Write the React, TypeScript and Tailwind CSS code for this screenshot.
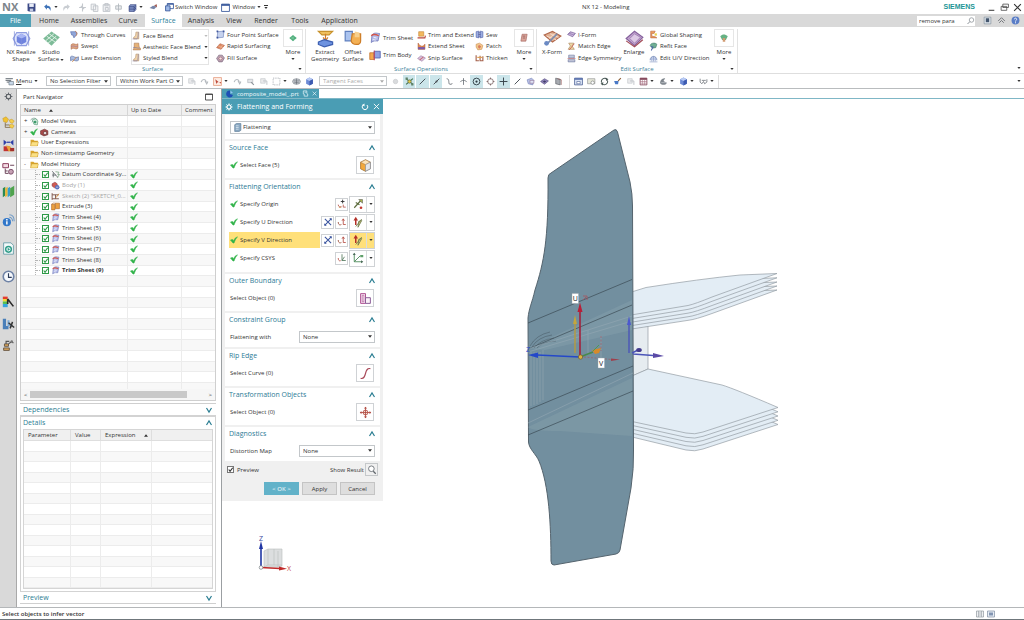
import React from "react";

const glyphs: Record<string, React.ReactNode> = {
  save: (<><path d="M1 1h14v14H3l-2-2z" fill="#3c4a86" /><path d="M4 1h8v6H4z" fill="#e9edf7" /><path d="M5 10h6v5H5z" fill="#c3cae2" /></>),
  undo: <path d="M2 6l5-4v3c6 0 8 4 6 9-1-4-3-5-6-5v3z" fill="#3f73b8" />,
  redo: <path d="M14 6L9 2v3C3 5 1 9 3 14c1-4 3-5 6-5v3z" fill="#c9cdd2" />,
  cut: <path d="M8 1v14M2 8h12M5 5l6 6" stroke="#c4c8cd" strokeWidth="2" fill="none" />,
  copy: <path d="M2 2h8v10H2zM6 5h8v10H6z" stroke="#bcc1c7" strokeWidth="1.5" fill="#f5f5f6" />,
  paste: <path d="M2 3h12v12H2zM5 1h6v4H5zM6 8h5v5H6z" stroke="#bcc1c7" strokeWidth="1.5" fill="#f1f1f3" />,
  brush: <path d="M8 1v14M3 5h10v6H3z" stroke="#b0b5bb" strokeWidth="1.5" fill="#eceef0" />,
  layers: (<><path d="M4 3h10v9l-3 3H2V6z" fill="#8fa3d4" stroke="#2f3e7c" strokeWidth="1.2" /><path d="M2 6h9l3-3M11 6v9M2 9h9l3-3M2 12h9l3-3" fill="none" stroke="#2f3e7c" strokeWidth="1.2" /></>),
  touch: (<><path d="M1 9l6-4 7 1-5 5z" fill="#7684a8" /><path d="M9 4l5-2v6z" fill="#a35c52" /></>),
  switchwin: (<><path d="M4 1h11v9H4z" fill="#fff" stroke="#35569a" strokeWidth="1.5" /><path d="M1 5h8v9H1z" fill="#9db8e6" stroke="#35569a" strokeWidth="1.5" /><path d="M4 1h11v2H4z" fill="#35569a" /></>),
  windowi: (<><path d="M1 2h14v13H1z" fill="#fff" stroke="#35569a" strokeWidth="1.5" /><path d="M1 2h14v3H1z" fill="#35569a" /></>),
  realize: (<><path d="M4 3h8l3 5-3 6H4L1 8z" fill="#dfe5fb" stroke="#8f9de0" /><path d="M8 4l4 2v5l-4 2-4-2V6z" fill="#6f83de" /><path d="M8 4l4 2-4 2-4-2z" fill="#a9b6f4" /><path d="M8 8v5M2 2v12M14 2v12" stroke="#7c8bd8" strokeWidth=".6" /></>),
  studio: (<><path d="M1 8l7-6 7 5-7 7z" fill="#7dbb98" /><path d="M3 10l7-6M5 12l7-6M4 6l7 5M6 4l7 5" stroke="#e0f2e7" strokeWidth=".8" /></>),
  curves: (<><path d="M1 3h9c3 1 3 4 1 6l-4 5-2-5H3z" fill="#91a6d8" stroke="#4c63a8" /><path d="M9 2c4 2 4 6 1 9" stroke="#c87b4c" fill="none" strokeWidth="1.5" /></>),
  swept: (<><path d="M2 5c4-5 8 2 12-2v8c-4 4-8-3-12 2z" fill="#e0a680" stroke="#a6603c" /><path d="M2 9c4-5 8 2 12-2" stroke="#8f6fa0" fill="none" /></>),
  law: (<><path d="M1 5c4-4 8 4 14 0v6c-5 4-9-3-14 1z" fill="#a9bbe0" stroke="#4a6198" /><path d="M4 14l8-9" stroke="#d08a4a" strokeWidth="1.5" /></>),
  blend: (<><path d="M7 2h5v12H3v-3c3-1 4-4 4-9z" fill="#efd2a8" stroke="#b08a62" /><path d="M1 14h8c2-3 2-7 2-12" stroke="#8b84a8" strokeWidth="1.2" fill="none" /></>),
  blend2: (<><path d="M4 2h8c0 5 1 8 3 9v3H2c2-3 2-7 2-12z" fill="#e6b277" stroke="#a5714a" /><path d="M2 10c4-1 6 1 12 1" stroke="#6a6fa6" fill="none" /></>),
  four: (<><path d="M3 3l11-1-1 11-11 1z" fill="#c6d2ee" stroke="#6177b4" /><path d="M1 1h3v3H1zM12 1h3v3h-3zM1 12h3v3H1z" fill="#3f569c" /></>),
  rapid: (<><path d="M1 10l6-7 8 3-6 7z" fill="#dd8a62" stroke="#b05a3c" /><path d="M4 7l8 3M7 12l5-7" stroke="#f2c1a4" /></>),
  fill: (<><path d="M1 8l4-6h6l4 5-4 7H5z" fill="#b9a2b3" stroke="#71586f" /><path d="M5 8l3-3 3 3-3 3z" fill="#efe6ec" stroke="#a84f4f" /></>),
  more1: (<><path d="M2 8l6-5 6 5-6 5z" fill="#4fae7c" /><path d="M5 10l6-5M5 6l6 5" stroke="#9ad4b3" strokeWidth=".8" /></>),
  more2: (<><path d="M5 2h8l-2 11H3z" fill="#dba59a" stroke="#a0625b" /><path d="M6 5h4M6 8h4" stroke="#7d4a4a" /></>),
  more3: (<><path d="M2 5c4-4 8-3 12 0l-3 6H5z" fill="#66b284" /><path d="M6 8h4v6H6z" fill="#d19b72" /></>),
  extract: (<><path d="M2 2h12l-3 3H5z" fill="#f0c05e" stroke="#c8922d" /><path d="M8 4v5M6 7l2 3 2-3" stroke="#d37c2a" fill="none" /><path d="M2 11l5-2 7 2v2l-7 2-5-2z" fill="#6e93e0" stroke="#3d5fb1" /></>),
  offset: (<><path d="M1 2h6v8H1z" fill="#aac3ef" stroke="#5f80bf" /><path d="M7 4h7v6c0 4-7 4-8 0z" fill="#f3b054" stroke="#cd7d27" /><path d="M9 2l4 1v4H9z" fill="#f7d08f" /></>),
  trims: (<><path d="M4 4c3-4 7-2 10-2l-2 10c-3 0-6-1-9 2z" fill="#b7bde9" stroke="#6670b6" /><path d="M3 5c3-3 6-2 10 0" stroke="#d4574b" strokeWidth="1.8" fill="none" /><path d="M6 7l4 1M5 10l4 1" stroke="#fff" /></>),
  trimb: (<><path d="M1 5h6v9H1z" fill="#f3a64e" stroke="#c2722a" /><path d="M7 3h8v9H7z" fill="#8fa1e2" stroke="#4858a8" /><path d="M7 2v13" stroke="#c13f5e" strokeWidth="1.3" /></>),
  extend: (<><path d="M3 3h9v8H3z" fill="#f3b95e" stroke="#c07f2d" /><path d="M1 14h13l1-4" stroke="#b8483f" strokeWidth="2" fill="none" /></>),
  extsheet: (<><path d="M2 2v11h12V4c-3 5-8 5-12-2z" fill="#e58a49" stroke="#a9502b" /><path d="M2 9h12v4H2z" fill="#7a5aa8" /></>),
  snip: (<><path d="M1 8l6-5 8 4-6 6z" fill="#d7bfd8" stroke="#9b77a3" /><path d="M5 11c2-5 5-2 6-6" stroke="#c24c56" fill="none" strokeWidth="1.5" /></>),
  sew: (<><path d="M2 3l5-1v12l-5-1zM9 2l5 1v10l-5 1z" fill="#9daee2" stroke="#4657a0" /><path d="M6 5h4M6 8h4M6 11h4" stroke="#333d80" /></>),
  patch: (<><path d="M2 4l6-2 6 4-2 7-7 1-3-5z" fill="#f2c88d" stroke="#c98a4a" /><path d="M7 5l4 3-3 4-3-3z" fill="#d97c5e" /></>),
  thicken: (<><path d="M2 2v10h5M9 3v9h5V4" stroke="#a5624c" strokeWidth="2" fill="none" /><path d="M4 6h9" stroke="#dda14f" strokeWidth="2" /></>),
  xform: (<><path d="M1 5l7-3 7 4-7 5z" fill="#e2b193" stroke="#b2694c" /><path d="M3 6l8 3M6 4l7 3M5 8l6-5" stroke="#f7e2d3" strokeWidth=".7" /><path d="M3 13l9-9" stroke="#7b8cae" strokeWidth="1.4" /><circle cx="3" cy="12" r="2" fill="#6b8ac4" /></>),
  iform: (<><path d="M1 8l5-5 9 3-5 6z" fill="#a188bd" stroke="#694c8d" /><path d="M3 8l8 2M6 5l7 2" stroke="#e7def0" /></>),
  match: (<><path d="M3 2h9l-3 5 4 6H2l4-6z" fill="#eed8a5" stroke="#a17b4f" /><path d="M4 14L13 3" stroke="#c44b42" strokeWidth="1.4" /></>),
  edgesym: (<><path d="M3 2h10v5H3zM2 10h12v4H2z" fill="#c4c9dc" stroke="#626c95" /><path d="M1 8h14" stroke="#b04f4f" /></>),
  enlarge: (<><path d="M1 8l7-6 7 5-7 7z" fill="#c3a4cf" stroke="#84609b" /><path d="M4 8l4-4 5 3-5 5z" fill="#ddc9e5" stroke="#9a78ae" strokeWidth=".7" /><path d="M1 10l7 5 7-6" stroke="#a34c57" fill="none" /></>),
  global: (<><path d="M3 2h8l-2 4H5v5l6 1 3 2H3z" fill="#f0a05a" stroke="#b5603b" /><path d="M10 6h4v4h-4z" fill="#e8d04a" /></>),
  refit: (<><path d="M2 6c2-5 9-5 12-2l-2 6-6 1z" fill="#6fae94" stroke="#417a69" /><path d="M3 8l4 1-3 6" stroke="#4a64a4" strokeWidth="1.8" fill="none" /></>),
  edituv: (<><path d="M2 11C2 2 14 2 14 11" fill="#cfd9ef" stroke="#6077ac" strokeWidth="1.2" /><path d="M1 14h14M5 6v7M8 4v9M11 6v7" stroke="#7388bb" /></>),
  menu: (<><path d="M1 3h13M1 6h10M3 9h8" stroke="#555d66" strokeWidth="1.6" /><path d="M7 8h8v6H7z" fill="#c7d7e7" stroke="#5d6b78" /></>),
  ghost: (<><path d="M3 3h8v8H3z" fill="#ececee" stroke="#b9bdc2" /><path d="M7 7h7v7" fill="none" stroke="#b9bdc2" strokeWidth="1.5" /></>),
  ghost2: <path d="M2 9c2-6 8-6 9 0M9 7l3 5 2-4" fill="none" stroke="#b4b9be" strokeWidth="2" />,
  ghost3: (<><path d="M3 4h9v6H3z" fill="#e4e6e9" stroke="#a7acb2" /><path d="M9 9l5 5" stroke="#8e949b" strokeWidth="2" /></>),
  redsel: (<><path d="M1 1h14v14H1z" fill="#fdeee6" stroke="#dc7850" /><path d="M4 4l6 5-3 1-1 3zM11 9h3v3" fill="#be4a3a" /></>),
  dashed: <path d="M2 2h12v12H2z" fill="none" stroke="#8b9299" strokeDasharray="2 2" strokeWidth="1.3" />,
  globe: (<><ellipse cx="8" cy="8" rx="7" ry="5" fill="#c8ccd2" stroke="#70777f" /><path d="M3 7h10M4 10h8M8 3v10" stroke="#596068" /></>),
  cube: (<><path d="M8 1l6 3v8l-6 3-6-3V4z" fill="#6d8bd6" /><path d="M8 1l6 3-6 3-6-3z" fill="#bacbf4" /><path d="M8 7l6-3v8l-6 3z" fill="#3d5bb0" /></>),
  dot: <circle cx="8" cy="8" r="4" fill="#d9dbdd" stroke="#c0c3c6" />,
  snap: (<><path d="M2 3l12 10M14 3L2 13" stroke="#3f6f4c" strokeWidth="2" /><circle cx="8" cy="8" r="3" fill="#dfc84b" stroke="#4c5f45" /><path d="M1 1h4v4H1zM11 11h4v4h-4z" fill="#5f8268" /></>),
  line: <path d="M3 13L13 3" stroke="#454c53" strokeWidth="1.7" />,
  linedot: (<><path d="M3 13L13 3" stroke="#454c53" strokeWidth="1.7" /><circle cx="8" cy="8" r="1.8" fill="#454c53" /></>),
  scurve: <path d="M3 3c6 0 2 10 6 10s4-2 4-2" stroke="#62686f" strokeWidth="1.5" fill="none" />,
  cross: <path d="M8 2v12M2 9c3-4 9-4 12 0" stroke="#62686f" strokeWidth="1.4" fill="none" />,
  target: (<><circle cx="8" cy="8" r="6" fill="none" stroke="#2d3a42" strokeWidth="1.6" /><circle cx="8" cy="8" r="2" fill="#2d3a42" /></>),
  diamond: (<><circle cx="8" cy="8" r="5" fill="none" stroke="#7a6464" strokeWidth="1.4" /><path d="M8 1v3M8 12v3M1 8h3M12 8h3" stroke="#7a6464" strokeWidth="1.5" /></>),
  plus: <path d="M8 1v14M1 8h14" stroke="#37434a" strokeWidth="1.7" />,
  facept: (<><path d="M2 5l8-3 4 4-2 8-8-2z" fill="#b8c2e7" stroke="#6a78b2" /><path d="M7 6h7v5H7z" fill="#dfe4f6" stroke="#8e6c8e" /></>),
  purple: (<><path d="M1 8l7-5 7 4-7 6z" fill="#8c80b6" stroke="#4b4377" /><path d="M5 8l3-2 3 2-3 2z" fill="#3e3b66" /></>),
  grid3: (<><path d="M3 2l8 2v10l-8-2z" fill="#a7abb1" stroke="#4c5056" /><path d="M6 3l7 2v9" fill="none" stroke="#8b4a4a" /></>),
  viewfit: (<><path d="M1 2h14v12H1z" fill="#dbe4f5" stroke="#42588f" strokeWidth="1.3" /><path d="M1 2h14v3H1z" fill="#5a72ae" /><path d="M5 8h6v4H5z" fill="#fff" stroke="#42588f" /></>),
  zoomimg: (<><path d="M1 3h13v9H1z" fill="#e6e7d9" stroke="#85888a" /><circle cx="10" cy="10" r="3" fill="#fff" stroke="#6b6e70" /></>),
  rotate: (<><path d="M3 10A5.500 5.500 0 0 1 12 4M13 6A5.500 5.500 0 0 1 4 12" stroke="#4b5a57" strokeWidth="1.8" fill="none" /><path d="M10 1l5 3-4 3zM6 9l-5 3 4 3z" fill="#4b5a57" /></>),
  paint: (<><path d="M9 7l5-5" stroke="#8c5d35" strokeWidth="2" /><path d="M2 7h8l-1 6H4z" fill="#4a79c6" /></>),
  tabler: (<><path d="M2 2h12v12H2z" fill="#fff" stroke="#7e3e53" strokeWidth="1.4" /><path d="M2 2h12v3H2z" fill="#7e3e53" /><path d="M2 8h12M2 11h12M6 5v9M10 5v9" stroke="#a86e80" /></>),
  wedge: (<><path d="M2 11c0-7 5-9 9-9l-3 5 6 3c-2 5-9 5-12 1z" fill="#7f868d" /><path d="M4 10h9" stroke="#dadde0" /></>),
  glasses: <path d="M2 3v6l3 3 3-4 2 4 4-3V4M5 6h7" stroke="#6b7076" strokeWidth="1.4" fill="none" />,
  gear: (<><circle cx="8" cy="8" r="4" fill="none" stroke="#5a5f64" strokeWidth="2" /><path d="M8 1v3M8 12v3M1 8h3M12 8h3M3 3l2 2M11 11l2 2M13 3l-2 2M5 11l-2 2" stroke="#5a5f64" strokeWidth="1.6" /></>),
  gearw: (<><circle cx="8" cy="8" r="4" fill="none" stroke="#fff" strokeWidth="2.2" /><path d="M8 1v3M8 12v3M1 8h3M12 8h3M3 3l2 2M11 11l2 2M13 3l-2 2M5 11l-2 2" stroke="#fff" strokeWidth="2" /></>),
  asm: (<><path d="M1 3l4-2 3 3-2 4-4-1z" fill="#f1c232" stroke="#c1911a" strokeWidth=".6" /><path d="M4 8v6h6M4 11h5" stroke="#7a6540" fill="none" /><path d="M9 5l3-1 3 2-2 3-3-1zM9 11l3-1 3 2-2 3-3-1z" fill="#f4cf4f" stroke="#c1911a" strokeWidth=".6" /></>),
  constr: (<><path d="M2 1v7l4-4zM14 1v7l-4-4z" fill="#2d3fa8" /><path d="M6 4h4" stroke="#2d3fa8" strokeWidth="1.5" /><path d="M2 9h7v6H2z" fill="#c23431" /><path d="M5 8l5 1 4 6H8z" fill="#e8a23a" /><path d="M10 11h5v4h-5z" fill="#a3302c" /></>),
  partnav: (<><path d="M1 2h7v5H1z" fill="#f3dce4" stroke="#8b3d5d" strokeWidth="1.2" /><path d="M10 4h5M4 8v6h4M4 11h3" stroke="#6b4358" strokeWidth="1.2" fill="none" /><circle cx="11" cy="12" r="3" fill="#c5a1b4" stroke="#6d3c5a" /></>),
  books: (<><path d="M1 4l3-2v11l-3 2z" fill="#2a8a53" /><path d="M4 4l3-2v11l-3 2z" fill="#edb42f" /><path d="M7 4l3-2v11l-3 2z" fill="#37a0c9" /><path d="M10 4l5-3v11l-5 3z" fill="#4fa34e" /></>),
  info: (<><circle cx="6" cy="10" r="5" fill="#3177c9" /><path d="M6 9v4M6 6v2" stroke="#fff" strokeWidth="1.8" /><path d="M9 4c2 0 4 2 4 5M9 1c4 0 6 3 6 8" stroke="#6e99c6" strokeWidth="1.3" fill="none" /></>),
  web: (<><path d="M2 1h9l3 3v11H2z" fill="#f3fafa" stroke="#5c95a0" /><circle cx="8" cy="9" r="3.500" fill="none" stroke="#2f9c88" strokeWidth="1.8" /><path d="M7 7l3 2-3 2z" fill="#2f9c88" /></>),
  clock: (<><circle cx="8" cy="8" r="6.500" fill="#f6f9fd" stroke="#6f83a6" strokeWidth="2" /><path d="M8 4v5h4" stroke="#2c3a57" strokeWidth="1.4" fill="none" /></>),
  palette: (<><path d="M1 2h6v3H1z" fill="#e33d2e" /><path d="M1 5h6v3H1z" fill="#f2d835" /><path d="M1 8h6v3H1z" fill="#54c04b" /><path d="M1 11h6v4H1z" fill="#35a5de" /><path d="M7 5l7 9M7 5v6" stroke="#2a2a2a" strokeWidth="2" /></>),
  roles: (<><path d="M3 2v11h5" stroke="#4a7fb9" strokeWidth="4" fill="none" /><path d="M8 4v6h4" stroke="#78a8d6" strokeWidth="2.5" fill="none" /><path d="M10 14l3-8M8 7l7 6" stroke="#333" strokeWidth="1.8" /></>),
  proc: (<><path d="M3 6h5v3H3zM2 11h7v3H2z" fill="#d9a45b" stroke="#56493a" /><path d="M8 6l4-3 2 2M5 6V3h4" stroke="#555" strokeWidth="1.4" fill="none" /><circle cx="12" cy="3" r="1.500" fill="#777" /></>),
  views: (<><path d="M1 6c2-5 9-5 12-1M3 9c2-3 8-3 10 0" stroke="#6f8f85" strokeWidth="1.2" fill="none" /><path d="M4 5l6-2 4 4-1 7-6-1z" fill="#d5ebdf" stroke="#3f8f67" /><circle cx="9" cy="9" r="2.500" fill="#3f9c6c" /></>),
  camera: (<><path d="M1 5l7-3 6 3v7l-7 2-6-3z" fill="#a84a4a" stroke="#5f2b2b" /><circle cx="9" cy="9" r="3" fill="#e5dada" stroke="#532a2a" /></>),
  folder: (<><path d="M1 3h5l2 2h6v9H1z" fill="#d9a52d" /><path d="M3 7h12l-2 7H1z" fill="#fbe083" stroke="#c1922c" strokeWidth=".7" /></>),
  datum: (<><path d="M2 2l10 11M4 13V5M2 9h7" stroke="#54595e" strokeWidth="1.3" fill="none" /><path d="M8 3l6 1-2 4h3l-4 6" stroke="#6d9a74" fill="none" strokeWidth="1.3" /></>),
  body: (<><path d="M2 5l5-3 4 3v5l-5 2-4-3z" fill="#d15b52" stroke="#8a3843" /><circle cx="11" cy="11" r="4" fill="#5b72bd" /><path d="M9 11h4" stroke="#fff" /></>),
  sketch: (<><path d="M2 2v12M2 5h12M2 12h12M8 5v7" stroke="#7a5146" strokeWidth="1.6" fill="none" /><path d="M9 10l5-7" stroke="#d58b35" strokeWidth="1.5" /></>),
  extrude: (<><path d="M1 4h6v10H1zM8 2h7v10H8z" fill="#eda13f" stroke="#a86120" /><path d="M1 4l3-2h4" stroke="#a86120" fill="none" /></>),
  flat: (<><path d="M3 3l3-2h8v12l-3 2H3z" fill="#8aa8c2" stroke="#4b6c8b" /><path d="M5 5h5M5 8h5M5 11h5" stroke="#e9f1f8" strokeWidth="1.2" /></>),
  face: (<><path d="M8 1l6 3v8l-6 3-6-3V4z" fill="#fff" stroke="#81756a" /><path d="M2 4l6 3v8l-6-3z" fill="#f3a93d" stroke="#b87a2c" strokeWidth=".7" /><path d="M8 1l6 3-6 3-6-3z" fill="#fbe3ba" stroke="#b87a2c" strokeWidth=".7" /><path d="M8 7l6-3v8l-6 3z" fill="#e4e6ea" stroke="#81858a" strokeWidth=".7" /></>),
  ptdlg: (<><path d="M9 1v6M6 4h6" stroke="#2e2e2e" strokeWidth="1.4" /><path d="M2 9c0 4 3 4 5 3M10 9v4h4" stroke="#b5534b" strokeWidth="1.3" fill="none" /><path d="M3 13h4" stroke="#c98443" strokeWidth="1.5" /></>),
  infer: (<><path d="M3 13L12 3M5 6l5 3" stroke="#5e6d3e" strokeWidth="1.5" /><path d="M9 2h5v5z" fill="#a9b54e" stroke="#555" strokeWidth=".7" /><circle cx="12" cy="13" r="1.800" fill="#c23a30" /></>),
  reverse: (<><path d="M3 3l10 10M13 3L3 13" stroke="#3b55a0" strokeWidth="1.7" /><path d="M10 2h4v4zM2 10v4h4z" fill="#3b55a0" /></>),
  vecdlg: (<><path d="M10 3v9h4M10 3l-2 3M10 3l2 3" stroke="#b3463c" strokeWidth="1.3" fill="none" /><path d="M2 8c0 5 3 5 5 4" stroke="#a25b49" strokeWidth="1.5" fill="none" /></>),
  vector: (<><path d="M5 12V5" stroke="#b33028" strokeWidth="2" /><path d="M2 6l3-5 3 5z" fill="#b33028" /><path d="M5 14l8-10M8 15l5-9-4 1z" stroke="#6e7b4a" strokeWidth="1.1" fill="#d8cf8a" /></>),
  csysdlg: (<><path d="M8 2v10h6M8 12l4-6" stroke="#4d7458" strokeWidth="1.3" fill="none" /><path d="M2 8c0 5 3 5 4 4" stroke="#b3463c" strokeWidth="1.3" fill="none" /></>),
  csys: (<><path d="M3 2v11h11M3 13l8-8" stroke="#4c8a5a" strokeWidth="1.2" fill="none" /><path d="M1 4l2-3 2 3zM12 11l3 2-3 2z" fill="#4c6a5a" /><path d="M11 4h4v3h-4z" fill="#5fa06a" /></>),
  boundary: (<><path d="M2 2h6v12H2z" fill="#f8e9f4" stroke="#ad4d8f" strokeWidth="1.2" /><path d="M4 4h2v8H4z" fill="#fff" stroke="#ad4d8f" strokeWidth=".8" /><path d="M8 7h6v7H8z" fill="#fbf2f8" stroke="#8a5a96" strokeWidth="1.2" /></>),
  curve: <path d="M2 14c4 1 5-2 6-6s2-7 6-6" stroke="#a84858" strokeWidth="1.4" fill="none" />,
  move: (<><circle cx="8" cy="8" r="3" fill="#f4dcd4" stroke="#b0483e" /><path d="M8 2v12M2 8h12" stroke="#b0483e" /><path d="M8 1l2 2H6zM8 15l2-2H6zM1 8l2-2v4zM15 8l-2-2v4z" fill="#b0483e" /></>),
  search: (<><circle cx="7" cy="6" r="4.500" fill="#fff" stroke="#5e646a" strokeWidth="1.3" /><path d="M10 10l4 4" stroke="#5e646a" strokeWidth="2" /></>),
  searchl: (<><circle cx="9" cy="6" r="4.500" fill="#fff" stroke="#8a9096" strokeWidth="1.5" /><path d="M6 9l-5 5" stroke="#8a9096" strokeWidth="2" /></>),
  page: (<><path d="M2 2h12v12H2z" fill="#dfe5ec" stroke="#74828f" /><path d="M5 4h6v7H5z" fill="#44566e" /></>),
  sheet: (<><path d="M1 2h14v12H1z" fill="#eef0f2" stroke="#8a9299" strokeWidth="1.3" /><path d="M5 2v12M11 2v12M5 6h6M5 10h6" stroke="#8a9299" /></>),
  sheet2: (<><path d="M1 2h14v12H1z" fill="#e6ecf4" stroke="#76859a" strokeWidth="1.3" /><path d="M4 5h8v6H4z" fill="#8295b2" /></>),
  up: <path d="M2 9l6-6 6 6M4 12l4-4 4 4" stroke="#5f6469" strokeWidth="1.5" fill="none" />,
  help: (<><circle cx="8" cy="8" r="7" fill="#5a7dc6" /><path d="M6 6c0-3 4-3 4 0 0 2-2 1-2 4M8 11v2" stroke="#fff" strokeWidth="1.5" fill="none" /></>),
  restore: <path d="M5 2h10v6H5zM2 6h10v7H2z" fill="#fff" stroke="#4a4a4a" strokeWidth="1.4" />,
  x: <path d="M2 2l12 12M14 2L2 14" stroke="currentColor" strokeWidth="2" />,
  min: <path d="M3 13h10" stroke="#4a4a4a" strokeWidth="2" />,
  max: <path d="M1 2h14v12H1zM1 3h14" stroke="#444" strokeWidth="1.8" fill="none" />,
  reset: (<><path d="M4 4a5.500 5.500 0 1 0 8 0" stroke="#fff" strokeWidth="2" fill="none" /><path d="M7 1v6L2 4z" fill="#fff" /></>),
  prt: (<><path d="M8 1a7 7 0 1 0 6 9l-6-2z" fill="#1f4fb5" /><path d="M9 1l5 5-5 1z" fill="#8fc4f2" /></>),
  pin: <path d="M3 2h8v6l2 1v5H5V9H3zM6 5h4" stroke="#e6f6fa" strokeWidth="1.6" fill="none" />,
  chevu: <path d="M3 12l5-8 5 8" stroke="#2a7d92" strokeWidth="2.4" fill="none" />,
  chevd: <path d="M3 4l5 8 5-8" stroke="#2a7d92" strokeWidth="2.4" fill="none" />,
  check: <path d="M1 8l4-1 2 3c2-5 4-7 8-8-4 3-5 7-7 12H6z" fill="#31b34a" stroke="#31b34a" strokeWidth="1.2" strokeLinejoin="round" />,
};

function Icon({ n, s = "size-[10px]" }: { n: string; s?: string }) {
  return (
    <svg viewBox="0 0 16 16" className={`${s} shrink-0`} aria-hidden="true">
      {glyphs[n]}
    </svg>
  );
}

function Caret({ c = "text-[#333]", s = "h-[2px] w-[4px]" }: { c?: string; s?: string }) {
  return (
    <svg viewBox="0 0 8 5" className={`shrink-0 ${s} ${c}`} aria-hidden="true">
      <path d="M0 0h8L4 5z" fill="currentColor" />
    </svg>
  );
}

function Big({ n, lines, w, caret }: { n: string; lines: string[]; w: string; caret?: boolean }) {
  return (
    <button className={`flex flex-col items-center ${w}`}>
      <Icon n={n} s="size-[19px]" />
      <span className="mt-px flex flex-col text-center leading-[7px] whitespace-nowrap">
        {lines.map((l, i) => (
          <span key={l} className="flex items-center justify-center gap-px">
            {l}
            {caret && i === lines.length - 1 && <Caret />}
          </span>
        ))}
      </span>
    </button>
  );
}

function Col({ items, w, s }: { items: [string, string][]; w: string; s?: string }) {
  return (
    <div className={`flex flex-col justify-around pb-px ${w}`}>
      {items.map(([n, t]) => (
        <button key={t} className="flex items-center gap-[2px] whitespace-nowrap">
          <Icon n={n} s={s ?? "size-[9px]"} />
          {t}
        </button>
      ))}
    </div>
  );
}

function More({ n }: { n: string }) {
  return (
    <button className="flex w-[20px] flex-col items-center">
      <span className="flex h-[18px] w-[20px] items-center justify-center border border-[#e6e6e6]">
        <Icon n={n} />
      </span>
      <span className="mt-px leading-[8px]">More</span>
      <span className="mt-[2px] flex"><Caret /></span>
    </button>
  );
}

function RibbonGroup({ label, w, children }: { label: string; w: string; children: React.ReactNode }) {
  return (
    <section aria-label={label} className={`flex flex-col border-r border-[#e2e2e2] ${w}`}>
      <div className="flex h-[37px]">{children}</div>
      <div className="grid grid-cols-[1fr_auto_1fr] items-center px-[3px] leading-[8px] text-[#3d7f99]">
        <span />
        <span>{label}</span>
        <span className="flex justify-end"><Caret /></span>
      </div>
    </section>
  );
}

function Tool({ n, on, w = "w-[13px]" }: { n: string; on?: boolean; w?: string }) {
  return (
    <button aria-label={n} className={`flex h-[13px] shrink-0 items-center justify-center ${w} ${on ? "bg-[#cbe5ea]" : ""}`}>
      <Icon n={n} s="size-[9px]" />
    </button>
  );
}

function Pick({ label, value, w, h = "h-[10px]", tone = "text-[#333]", pad = "pl-[3px]" }: { label: string; value: string; w: string; h?: string; tone?: string; pad?: string }) {
  return (
    <span className={`relative flex items-center ${w}`}>
      <select aria-label={label} defaultValue={value} className={`w-full appearance-none rounded-none border border-[#c3c7ca] bg-white ${h} ${pad} ${tone}`}>
        <option>{value}</option>
      </select>
      <span className="pointer-events-none absolute right-[3px] flex"><Caret c={tone} s="h-[3px] w-[4px]" /></span>
    </span>
  );
}

function Box({ label, tone = "border-[#2f9a48] text-[#2f9a48]" }: { label: string; tone?: string }) {
  return (
    <span className="relative flex size-[7px] shrink-0">
      <input type="checkbox" aria-label={label} defaultChecked className={`peer size-[7px] appearance-none border bg-white ${tone}`} />
      <svg viewBox="0 0 8 8" className={`pointer-events-none absolute inset-0 hidden size-[7px] peer-checked:block ${tone}`}>
        <path d="M2 4l1.500 2L6.500 2" stroke="currentColor" strokeWidth="1.300" fill="none" />
      </svg>
    </span>
  );
}

function RibbonTabs() {
  const tabs: [string, string][] = [
    ["File", "w-[31px] bg-[#50a0b6] text-white"],
    ["Home", "w-[36px]"],
    ["Assemblies", "w-[44px]"],
    ["Curve", "w-[34px]"],
    ["Surface", "w-[37px] bg-white text-[#2d8299]"],
    ["Analysis", "w-[38px]"],
    ["View", "w-[28px]"],
    ["Render", "w-[36px]"],
    ["Tools", "w-[32px]"],
    ["Application", "w-[47px]"],
  ];
  return (
    <nav className="flex h-[13px] shrink-0 items-stretch bg-[#d9d9d9] text-[7px]">
      {tabs.map(([t, c]) => (
        <button key={t} className={`flex items-center justify-center ${c}`}>{t}</button>
      ))}
      <div className="ml-auto flex items-center gap-[4px] pr-[4px]">
        <label className="flex h-[10px] w-[58px] items-center bg-white">
          <input aria-label="Command search" defaultValue="remove para" className="w-0 flex-1 px-[2px] text-[6px] outline-none" />
          <Icon n="searchl" s="size-[8px]" />
        </label>
        <span className="ml-[4px] flex items-center gap-[5px]">
          {["page", "up", "help"].map((n) => (
            <button key={n} aria-label={n}><Icon n={n} s="size-[9px]" /></button>
          ))}
        </span>
      </div>
    </nav>
  );
}

function TitleBar() {
  return (
    <header className="flex h-[14px] shrink-0 items-center justify-between text-[6px]">
      <div className="flex items-center">
        <span className="w-[25px] pl-[2px] text-[11px] leading-[12px] font-bold text-[#7d858b]">NX</span>
        <Tool n="save" />
        <span className="ml-[3px] flex items-center"><Tool n="undo" /><Caret /></span>
        <span className="ml-[2px] flex"><Tool n="redo" /></span>
        <span className="ml-[3px] flex"><Tool n="cut" w="w-[12px]" /><Tool n="copy" w="w-[12px]" /><Tool n="paste" w="w-[12px]" /><Tool n="brush" w="w-[12px]" /></span>
        <span className="ml-[2px] flex items-center"><Tool n="layers" /><Caret /></span>
        <span className="ml-[4px] flex"><Tool n="touch" /></span>
        <button className="ml-[5px] flex items-center gap-px"><Icon n="switchwin" s="size-[9px]" />Switch Window</button>
        <button className="ml-[4px] flex items-center gap-[2px]"><Icon n="windowi" s="size-[9px]" />Window<Caret /></button>
        <span className="ml-[3px] flex flex-col gap-px border-t border-[#333] pt-px"><Caret /></span>
      </div>
      <h1 className="text-[6px]">NX 12 - Modeling</h1>
      <div className="flex items-center">
        <span className="mr-[10px] font-['Liberation_Sans'] text-[7px] font-bold text-[#1b9595]">SIEMENS</span>
        {["min", "restore", "x"].map((n) => (<Tool key={n} n={n} />))}
      </div>
    </header>
  );
}

function Ribbon() {
  return (
    <div className="flex h-[47px] shrink-0 border-b border-[#dedede] pt-[2px]">
      <RibbonGroup label="Surface" w="w-[306px]">
        <div className="flex pl-[6px]">
          <Big n="realize" lines={["NX Realize", "Shape"]} w="w-[30px]" />
          <Big n="studio" lines={["Studio", "Surface"]} w="w-[30px]" caret />
        </div>
        <Col w="ml-[4px] w-[61px]" items={[["curves", "Through Curves"], ["swept", "Swept"], ["law", "Law Extension"]]} />
        <div className="flex w-[78px] border border-[#e4e4e4]">
          <Col w="flex-1" items={[["blend", "Face Blend"], ["blend2", "Aesthetic Face Blend"], ["blend", "Styled Blend"]]} />
          <span className="flex flex-col items-center justify-around">
            <Caret c="text-[#bbb]" /><Caret /><Caret />
          </span>
        </div>
        <Col w="ml-[7px] w-[65px]" items={[["four", "Four Point Surface"], ["rapid", "Rapid Surfacing"], ["fill", "Fill Surface"]]} />
        <div className="ml-[2px] flex"><More n="more1" /></div>
      </RibbonGroup>
      <RibbonGroup label="Surface Operations" w="w-[231px]">
        <div className="flex pl-[4px]">
          <Big n="extract" lines={["Extract", "Geometry"]} w="w-[30px]" />
          <Big n="offset" lines={["Offset", "Surface"]} w="w-[26px]" />
        </div>
        <Col w="ml-[3px] w-[46px]" s="size-[12px]" items={[["trims", "Trim Sheet"], ["trimb", "Trim Body"]]} />
        <Col w="ml-[2px] w-[56px]" items={[["extend", "Trim and Extend"], ["extsheet", "Extend Sheet"], ["snip", "Snip Surface"]]} />
        <Col w="ml-[2px] w-[36px]" items={[["sew", "Sew"], ["patch", "Patch"], ["thicken", "Thicken"]]} />
        <div className="ml-[3px] flex"><More n="more2" /></div>
      </RibbonGroup>
      <RibbonGroup label="Edit Surface" w="w-[201px]">
        <Big n="xform" lines={["X-Form"]} w="w-[30px]" />
        <Col w="w-[53px]" items={[["iform", "I-Form"], ["match", "Match Edge"], ["edgesym", "Edge Symmetry"]]} />
        <Big n="enlarge" lines={["Enlarge"]} w="w-[28px]" />
        <Col w="ml-px w-[63px]" items={[["global", "Global Shaping"], ["refit", "Refit Face"], ["edituv", "Edit U/V Direction"]]} />
        <div className="ml-[2px] flex"><More n="more3" /></div>
      </RibbonGroup>
      <span className="mt-auto mr-[3px] mb-[4px] ml-auto flex"><Caret /></span>
    </div>
  );
}

function SelectionBar() {
  return (
    <div className="flex h-[15px] shrink-0 items-center border-b border-[#b9bcbe] pl-[5px]">
      <button className="flex w-[41px] items-center gap-[2px]"><Icon n="menu" s="size-[9px]" /><span><u>M</u>enu</span><Caret /></button>
      <Pick label="Selection filter" value="No Selection Filter" w="w-[65px]" />
      <span className="ml-[5px] flex"><Pick label="Selection scope" value="Within Work Part O" w="w-[67px]" /></span>
      <span className="ml-[2px] flex items-center">
        <Tool n="ghost" /><Tool n="ghost2" /><Tool n="redsel" /><Caret />
      </span>
      <span className="ml-[3px] flex items-center">
        <Tool n="ghost2" /><Tool n="ghost3" /><Tool n="ghost" /><Tool n="dashed" /><Caret />
      </span>
      <span className="ml-[3px] flex"><Tool n="globe" /><Tool n="cube" /></span>
      <span className="ml-[3px] flex"><Pick label="Face rule" value="Tangent Faces" w="w-[68px]" tone="text-[#aaa]" /></span>
      <span className="ml-[2px] flex gap-px">
        <Tool n="dot" /><Tool n="snap" on w="w-[12px]" /><Tool n="line" on /><Tool n="linedot" on w="w-[12px]" /><Tool n="scurve" /><Tool n="cross" w="w-[12px]" />
        <Tool n="target" on /><Tool n="diamond" w="w-[12px]" /><Tool n="plus" on /><Tool n="line" w="w-[12px]" /><Tool n="facept" /><Tool n="purple" w="w-[12px]" />
      </span>
      <span className="ml-[2px] flex border-r border-[#ddd] pr-[4px]"><Tool n="grid3" /></span>
      <span className="ml-[2px] flex items-center border-r border-[#ddd] pr-[4px]">
        <Tool n="viewfit" /><Tool n="zoomimg" /><Tool n="rotate" /><Tool n="paint" /><Tool n="ghost" />
        <Tool n="tabler" /><Caret />
        <span className="ml-[3px] flex items-center"><Tool n="wedge" /><Caret /></span>
        <span className="ml-[3px] flex items-center"><Tool n="cube" /><Caret /></span>
        <span className="ml-[3px] flex items-center"><Tool n="glasses" /><Caret /></span>
      </span>
      <span className="mr-[3px] ml-auto flex"><Caret /></span>
    </div>
  );
}

function Rail() {
  const small = ["asm", "constr", "partnav", "books"];
  return (
    <aside className="flex w-[17px] shrink-0 flex-col items-stretch border-r border-[#a9a9a9] bg-[#d9d9d9]">
      <button aria-label="Settings" className="mb-[8px] flex h-[14px] items-center justify-center"><Icon n="gear" s="size-[9px]" /></button>
      {small.map((n) => (
        <button key={n} aria-label={n} className={`flex h-[23px] items-center justify-center ${n === "partnav" ? "bg-white" : ""}`}><Icon n={n} s="size-[13px]" /></button>
      ))}
      <div className="mt-[3px] flex flex-col">
        {["info", "web", "clock"].map((n) => (
          <button key={n} aria-label={n} className="flex h-[28px] items-center justify-center"><Icon n={n} s="size-[13px]" /></button>
        ))}
      </div>
      {["palette", "roles", "proc"].map((n) => (
        <button key={n} aria-label={n} className="flex h-[22px] items-center justify-center"><Icon n={n} s="size-[13px]" /></button>
      ))}
    </aside>
  );
}

type Node = { t: string; n: string; top?: "+" | "-" | ""; ok?: boolean; dim?: boolean; bold?: boolean; tick?: boolean };
const nodes: Node[] = [
  { t: "Model Views", n: "views", top: "+" },
  { t: "Cameras", n: "camera", top: "+", tick: true },
  { t: "User Expressions", n: "folder", top: "" },
  { t: "Non-timestamp Geometry", n: "folder", top: "" },
  { t: "Model History", n: "folder", top: "-" },
  { t: "Datum Coordinate Sy...", n: "datum", ok: true },
  { t: "Body (1)", n: "body", ok: true, dim: true },
  { t: 'Sketch (2) "SKETCH_0...', n: "sketch", ok: true, dim: true },
  { t: "Extrude (3)", n: "extrude", ok: true },
  { t: "Trim Sheet (4)", n: "trims", ok: true },
  { t: "Trim Sheet (5)", n: "trims", ok: true },
  { t: "Trim Sheet (6)", n: "trims", ok: true },
  { t: "Trim Sheet (7)", n: "trims", ok: true },
  { t: "Trim Sheet (8)", n: "trims", ok: true },
  { t: "Trim Sheet (9)", n: "trims", ok: true, bold: true },
];
const treeRow = "h-[11px] nth-[3n]:h-[10px] odd:bg-white even:bg-[#f8f8f8]";
const treeCell = "border-r border-b border-[#ececec] p-0 last:border-r-0";

function Navigator() {
  return (
    <section aria-label="Part Navigator" className="flex w-[204px] shrink-0 flex-col pr-[5px] pl-[3px]">
      <div className="flex h-[15px] shrink-0 items-center justify-between px-[3px]">
        <h2 className="text-[6px]">Part Navigator</h2>
        <button aria-label="Maximize panel"><Icon n="max" s="size-[8px]" /></button>
      </div>
      <div className="flex min-h-0 flex-1 flex-col border border-[#cfcfcf]">
        <div className="min-h-0 flex-1 overflow-hidden">
          <table className="w-full table-fixed border-separate border-spacing-0 leading-[9px]">
            <colgroup><col className="w-[107px]" /><col className="w-[54px]" /><col /></colgroup>
            <thead>
              <tr className="h-[11px] bg-[#f0f0f0] text-left">
                <th className="border-r border-b border-[#d5d5d5] p-0 pl-[3px] font-normal">
                  <span className="flex items-center gap-[8px]">Name <span className="flex rotate-180"><Caret s="h-[3px] w-[4px]" /></span></span>
                </th>
                <th className="border-r border-b border-[#d5d5d5] p-0 pl-[3px] font-normal">Up to Date</th>
                <th className="border-b border-[#d5d5d5] p-0 pl-[3px] font-normal">Comment</th>
              </tr>
            </thead>
            <tbody>
              {nodes.map((d) => (
                <tr key={d.t} className={treeRow}>
                  <td className={treeCell}>
                    <span className={`flex h-[9px] items-center gap-[2px] whitespace-nowrap ${d.dim ? "text-[#a5a5a5]" : ""} ${d.bold ? "font-bold" : ""} ${d.top === undefined ? "pl-[14px]" : "pl-[3px]"}`}>
                      {d.top !== undefined && <span className="w-[4px]">{d.top}</span>}
                      {d.top === undefined && (
                        <>
                          <span className="flex h-full w-[5px] items-center border-l border-dotted border-[#b5b5b5]"><span className="h-px w-full border-t border-dotted border-[#b5b5b5]" /></span>
                          <Box label={`Show ${d.t}`} />
                        </>
                      )}
                      {d.tick && <Icon n="check" s="size-[8px]" />}
                      <Icon n={d.n} s="size-[9px]" />
                      {d.t}
                    </span>
                  </td>
                  <td className={treeCell}>{d.ok && <span className="flex pl-[2px]"><Icon n="check" s="size-[8px]" /></span>}</td>
                  <td className={treeCell} />
                </tr>
              ))}
              {Array.from({ length: 12 }, (_, i) => (
                <tr key={i} className={treeRow}>
                  <td className={treeCell} /><td className={treeCell} /><td className={treeCell} />
                </tr>
              ))}
            </tbody>
          </table>
        </div>
        <div className="flex h-[11px] shrink-0 items-center gap-[3px] bg-[#f6f6f6] px-[3px]">
          <span>&lt;</span>
          <span className="h-[7px] flex-[10] bg-[#c9c9c9]" />
          <span className="flex-1" />
          <span>&gt;</span>
        </div>
      </div>
      <button className="mt-[2px] flex h-[12px] shrink-0 items-center justify-between border-t border-[#cfcfcf] px-[3px] text-[7px] text-[#2a7d92]">
        Dependencies<Icon n="chevd" s="size-[8px]" />
      </button>
      <div className="shrink-0 border border-t-2 border-[#d3d3d3] px-[2px] pb-[2px]">
        <button className="flex h-[12px] w-full items-center justify-between text-[7px] text-[#2a7d92]">
          Details<Icon n="chevu" s="size-[8px]" />
        </button>
        <table className="w-full table-fixed border-separate border-spacing-0 border border-[#d5d5d5] leading-[9px]">
          <colgroup><col className="w-[47px]" /><col className="w-[30px]" /><col className="w-[51px]" /><col /></colgroup>
          <thead>
            <tr className="h-[11px] bg-[#f0f0f0] text-left">
              {["Parameter", "Value", "Expression", ""].map((h) => (
                <th key={h} className="border-r border-b border-[#dedede] p-0 pl-[4px] font-normal last:border-r-0">
                  <span className="flex items-center gap-[8px]">{h}{h === "Expression" && <span className="flex rotate-180"><Caret s="h-[3px] w-[4px]" /></span>}</span>
                </th>
              ))}
            </tr>
          </thead>
          <tbody>
            {Array.from({ length: 14 }, (_, i) => (
              <tr key={i} className="h-[11px] odd:bg-white even:h-[10px] even:bg-[#f8f8f8]">
                <td className={treeCell} /><td className={treeCell} /><td className={treeCell} /><td className={treeCell} />
              </tr>
            ))}
          </tbody>
        </table>
      </div>
      <button className="mb-[3px] flex h-[12px] shrink-0 items-center justify-between border-b border-[#cfcfcf] px-[3px] text-[7px] text-[#2a7d92]">
        Preview<Icon n="chevd" s="size-[8px]" />
      </button>
    </section>
  );
}

function Group({ title, children }: { title: string; children: React.ReactNode }) {
  return (
    <section className="bg-white px-[4px]">
      <button className="flex h-[13px] w-full items-center justify-between text-[7px] text-[#2d7b96]">
        {title}<Icon n="chevu" s="size-[8px]" />
      </button>
      {children}
    </section>
  );
}

function PickRow({ text, icon, done }: { text: string; icon: string; done?: boolean }) {
  return (
    <div className="mb-[2px] flex h-[22px] items-center pl-px">
      {done && <span className="mr-[2px]"><Icon n="check" s="size-[8px]" /></span>}
      {text}
      <button aria-label={text} className="mr-[2px] ml-auto flex size-[18px] items-center justify-center border border-[#cfd2d5] bg-white"><Icon n={icon} s="size-[13px]" /></button>
    </div>
  );
}

function SpecRow({ text, small, icon, active }: { text: string; small: string[]; icon: string; active?: boolean }) {
  return (
    <div className="flex h-[18px] items-center justify-between">
      <span className={`flex h-[16px] items-center gap-[2px] pl-px ${active ? "w-[91px] bg-[#ffe07a]" : ""}`}><Icon n="check" s="size-[8px]" />{text}</span>
      <span className="mr-px flex items-center gap-px">
        {small.map((n) => (
          <button key={n} aria-label={`${text} ${n}`} className="flex size-[13px] items-center justify-center border border-[#cfd2d5] bg-white"><Icon n={n} /></button>
        ))}
        <span className={`flex h-[17px] border border-[#cfd2d5] ${active ? "bg-[#ffe07a]" : "bg-white"}`}>
          <button aria-label={`${text} method`} className="flex w-[16px] items-center justify-center"><Icon n={icon} s="size-[12px]" /></button>
          <button aria-label={`${text} options`} className="flex w-[8px] items-center justify-center border-l border-[#d9dcde]"><Caret /></button>
        </span>
      </span>
    </div>
  );
}

function SelectRow({ text }: { text: string }) {
  return (
    <div className="flex h-[21px] items-center justify-between pr-px pl-px">
      <span>{text}</span>
      <Pick label={text} value="None" w="w-[76px]" h="h-[12px]" />
    </div>
  );
}

function FlattenDialog() {
  return (
    <form aria-label="Flattening and Forming" className="relative w-[161px] bg-[#f0f0f0] pb-[6px]">
      <div className="flex h-[15px] items-center bg-[#4a9db4] px-[3px] text-[7px] text-white">
        <Icon n="gearw" s="size-[8px]" />
        <span className="ml-[4px] flex-1">Flattening and Forming</span>
        <button type="button" aria-label="Reset"><Icon n="reset" s="size-[8px]" /></button>
        <button type="button" aria-label="Close" className="ml-[4px]"><Icon n="x" s="size-[7px]" /></button>
      </div>
      <div className="flex flex-col gap-[2px] px-[3px] pt-px">
        <div className="flex h-[24px] items-center bg-white px-[5px]">
          <span className="relative flex w-full items-center">
            <Pick label="Type" value="Flattening" w="w-full" h="h-[13px]" pad="pl-[12px]" />
            <span className="pointer-events-none absolute left-[3px] flex"><Icon n="flat" s="size-[9px]" /></span>
          </span>
        </div>
        <Group title="Source Face"><PickRow text="Select Face (5)" icon="face" done /></Group>
        <Group title="Flattening Orientation">
          <div className="pt-[2px] pb-[5px]">
            <SpecRow text="Specify Origin" small={["ptdlg"]} icon="infer" />
            <SpecRow text="Specify U Direction" small={["reverse", "vecdlg"]} icon="vector" />
            <SpecRow text="Specify V Direction" small={["reverse", "vecdlg"]} icon="vector" active />
            <SpecRow text="Specify CSYS" small={["csysdlg"]} icon="csys" />
          </div>
        </Group>
        <Group title="Outer Boundary"><PickRow text="Select Object (0)" icon="boundary" /></Group>
        <Group title="Constraint Group"><SelectRow text="Flattening with" /></Group>
        <Group title="Rip Edge"><PickRow text="Select Curve (0)" icon="curve" /></Group>
        <Group title="Transformation Objects"><PickRow text="Select Object (0)" icon="move" /></Group>
        <Group title="Diagnostics"><SelectRow text="Distortion Map" /></Group>
      </div>
      <div className="flex h-[17px] items-center justify-between px-[5px]">
        <span className="flex items-center gap-[3px]"><Box label="Preview" tone="border-[#777] text-[#333]" />Preview</span>
        <span className="flex items-center gap-px">Show Result
          <button type="button" aria-label="Show Result" className="flex size-[13px] items-center justify-center border border-[#c5c8ca]"><Icon n="search" /></button>
        </span>
      </div>
      <div className="mt-[4px] flex justify-end gap-[3px] pr-[8px]">
        <button type="button" className="h-[13px] w-[35px] bg-[#62b2c9] text-white">&lt; OK &gt;</button>
        <button type="button" className="h-[13px] w-[35px] border border-[#c4c4c4] bg-[#dedede]">Apply</button>
        <button type="button" className="h-[13px] w-[35px] border border-[#c4c4c4] bg-[#dedede]">Cancel</button>
      </div>
    </form>
  );
}

const blade = "M548 178Q548 174 551 173L614 130Q616.500 128.500 617.500 132L630 182Q632.500 194 632.500 206L633.500 450Q634 468 631 488L620 550Q619.500 553 616 554L554 565Q551 565 551 561C551 525 549 485 539 461C536 454 529 449 528.500 442L528 318C529 308 532 303 535 290C544 262 548.500 240 548 178Z";

function Scene() {
  return (
    <svg viewBox="222 99 802 508" preserveAspectRatio="xMinYMin meet" className="absolute inset-0 h-full w-full" fontFamily="Open Sans, sans-serif">
      <g stroke="#949ca3" strokeWidth=".7" strokeLinejoin="round">
        <path d="M630 328L648 326V369L630 377Z" fill="#e6ecf0" />
        {[16.500, 12.500, 8.500, 4.300, 0].map((d) => (
          <path key={d} d={`M625 ${294 + d}L646 ${287.500 + d * 0.9}Q700 ${279 + d} 740 ${275 + d}L777 ${273.500 + d}L712 ${297 + d}Q695 ${304 + d * 0.95} 688 ${305.500 + d * 0.9}L625 ${316 + d * 0.85}Z`} fill="#e3edf5" />
        ))}
        {[17, 12.800, 8.500, 4.300, 0].map((d) => (
          <path key={d} d={`M625 ${379 + d}L648 ${369 + d}L722 ${385 + d}Q735 ${389 + d} 778 ${407.500 + d}L703 ${432 + d}Q695 ${435 + d} 686 ${433 + d}L625 ${420 + d * 0.9}Z`} fill="#e3edf5" />
        ))}
      </g>
      <path d={blade} fill="#728f9f" stroke="#55646e" strokeWidth="1" />
      <path d="M528 348L632 300V330L545 350Z" fill="#7f9aa8" opacity=".7" />
      <path d="M528 427L632 378V436L560 431Q532 431 528 427Z" fill="#829ca8" opacity=".6" />
      <g stroke="#3b4b55" strokeWidth=".7" fill="none">
        <path d="M528 323L632 279.500M528 349L632 305M528 410L633 366M528 435L633 391" />
        <path d="M530 346Q536 335 550 332M532 347Q538 337 552 335M534 348Q540 340 554 338M537 348Q542 342 556 341" opacity=".6" />
      </g>
      <path d="M531 352V406M534 352V405M537 352V404M540 352V402M543 350V400M528 349L632 316M528 352L632 321M528 423L633 373M588 330V355M601 336V362" stroke="#93a8b3" strokeWidth=".6" fill="none" />
      <path d="M575 353V323" stroke="#b39a43" strokeWidth="1.500" />
      <path d="M573 324L575 315L577 324Z" fill="#c4a63c" />
      <path d="M580 357V310" stroke="#a3213c" strokeWidth="1.600" />
      <path d="M577.500 312L580 302.500L582.500 312Z" fill="#b81e38" />
      <path d="M580 357L537 355" stroke="#2448c9" strokeWidth="1.600" />
      <path d="M538 352.500L528 355L538 358Z" fill="#2448c9" />
      <path d="M580 357L593 352" stroke="#478a4c" strokeWidth="1.600" />
      <path d="M592 350L601 348L599 353L595 354Z" fill="#d58a2a" />
      <path d="M593 351L599 345" stroke="#4c9b55" />
      <circle cx="580.500" cy="357" r="2.200" fill="#d9b342" stroke="#6f5c30" strokeWidth=".7" />
      <path d="M601 336V351M584 357L612 359.500" stroke="#a8505c" strokeWidth=".6" strokeDasharray="2 1.500" />
      <path d="M611 358.500L620 359.500L611 361Z" fill="#9f3f4c" />
      <path d="M629 353V322M633 354L653 355.500M632 353L638 350" stroke="#4b55b8" strokeWidth="1.400" />
      <path d="M627 325L629 316L631 325Z" fill="#4b58cf" />
      <path d="M653 353L664 356L653 358Z" fill="#5b4aa6" />
      <ellipse cx="639" cy="350" rx="2.800" ry="2" fill="#443c8e" />
      <path d="M583 296h4v4M583 300l3-3" stroke="#a8505c" strokeWidth=".8" fill="none" />
      <path d="M572 293.500h6.500v10H572zM598 358h6.500v10H598z" fill="#fff" stroke="#9aa2a8" strokeWidth=".4" />
      <text x="575.200" y="301.300" fontSize="7" textAnchor="middle" fill="#222">U</text>
      <text x="601.200" y="365.700" fontSize="7" textAnchor="middle" fill="#222">V</text>
      <text x="526" y="352" fontSize="7" fill="#2448c9">Z</text>
      <path d="M264 551l4-2h14v17l-3 1h-15z" fill="#dcdedf" stroke="#b9bcbe" strokeWidth=".6" />
      <path d="M268 549v16l-4 2M268 565h14M274 549v16M278 551v16" stroke="#b9bcbe" strokeWidth=".6" fill="none" />
      <path d="M261 567V547" stroke="#2036a4" strokeWidth="1.600" />
      <path d="M259 549L261 541L263 549Z" fill="#2036a4" />
      <path d="M261 567.500L280 568.500" stroke="#c02a2a" strokeWidth="1.400" />
      <path d="M279 566.500L287 568.800L279 570.500Z" fill="#c02a2a" />
      <circle cx="261" cy="567.500" r="1.800" fill="#fff" stroke="#7a7f84" strokeWidth=".7" />
      <text x="261" y="541" fontSize="7" textAnchor="middle" fill="#3a4a9e">Z</text>
      <text x="289" y="571" fontSize="7" textAnchor="middle" fill="#c64a4a">X</text>
    </svg>
  );
}

export default function App() {
  return (
    <div className="flex h-screen flex-col overflow-hidden bg-white font-['Open_Sans','Noto_Sans',sans-serif] text-[6px] leading-[8px] text-[#333]">
      <TitleBar />
      <RibbonTabs />
      <Ribbon />
      <SelectionBar />
      <div className="flex min-h-0 flex-1">
        <Rail />
        <Navigator />
        <main className="flex min-w-0 flex-1 flex-col border-l border-[#9b9fa2]">
          <div className="flex h-[10px] shrink-0 border-b border-[#7fb7c6]">
            <button className="flex w-[97px] items-center gap-[3px] bg-[#4a9db4] px-[4px] text-[#f3fbfd]">
              <Icon n="prt" s="size-[8px]" />composite_model_.prt<Icon n="pin" s="size-[7px]" /><Icon n="x" s="size-[5px]" />
            </button>
          </div>
          <div className="relative min-h-0 flex-1">
            <Scene />
            <FlattenDialog />
          </div>
        </main>
      </div>
      <footer className="flex h-[13px] shrink-0 items-center justify-between border-t border-b border-t-[#b4b7b9] border-b-[#6f767b] pr-[29px] pl-[2px]">
        <span className="font-semibold">Select objects to infer vector</span>
        <span className="flex gap-[3px]"><Icon n="sheet" s="size-[8px]" /><Icon n="sheet2" s="size-[8px]" /></span>
      </footer>
    </div>
  );
}
